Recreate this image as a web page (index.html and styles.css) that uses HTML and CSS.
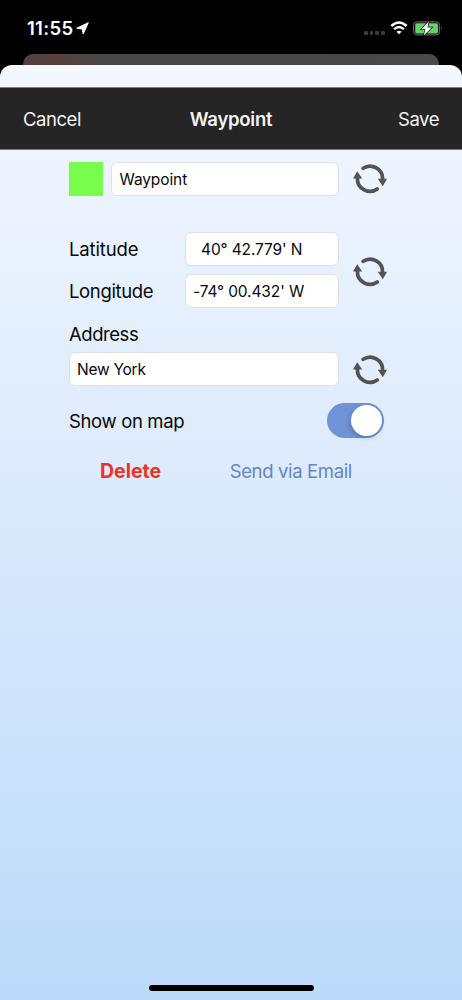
FILE: index.html
```html
<!DOCTYPE html>
<html lang="en">
<head>
  <meta charset="UTF-8">
  <meta name="viewport" content="width=device-width, initial-scale=1.0">
  <title>Waypoint</title>
  <link rel="stylesheet" href="styles.css">
</head>
<body>
  <svg class="symbols" aria-hidden="true">
    <symbol id="refresh" viewBox="0 0 36 36">
      <path d="M11.1 7.3 A12.6 12.6 0 0 1 30.6 18.5" fill="none" stroke="#535351" stroke-width="3.7" stroke-linecap="round"/>
      <path d="M25.8 17.8 H35 L30.8 25.2 Z" fill="#535351"/>
      <path d="M25.3 28 A12.6 12.6 0 0 1 5.4 17.5" fill="none" stroke="#535351" stroke-width="3.7" stroke-linecap="round"/>
      <path d="M10.2 17.6 H1 L5.2 10.2 Z" fill="#535351"/>
    </symbol>
  </svg>

  <div class="status-bar">
    <div class="clock">
      <span class="time">11:55</span>
      <svg class="location" viewBox="0 0 13 13"><path d="M12.3 0.7 L7.2 12 L6.1 7 L0.7 6.2 Z" fill="#fff" stroke="#fff" stroke-width="1" stroke-linejoin="round"/></svg>
    </div>
    <div class="status-icons">
      <div class="signal"><i></i><i></i><i></i><i></i></div>
      <svg class="wifi" viewBox="0 0 18 14">
        <path d="M1.3 5 Q9 -2 16.7 5" fill="none" stroke="#fff" stroke-width="2.6"/>
        <path d="M4.1 8.2 Q9 3.8 13.9 8.2" fill="none" stroke="#fff" stroke-width="2.4"/>
        <path d="M9 13.3 L6.5 10.7 Q9 8.6 11.5 10.7 Z" fill="#fff"/>
      </svg>
      <svg class="battery" viewBox="0 0 30 15">
        <rect x="0.6" y="0.9" width="26" height="13" rx="3.6" fill="none" stroke="#777" stroke-width="1"/>
        <rect x="2.2" y="2.3" width="22.8" height="10.2" rx="1.8" fill="#65d368"/>
        <path d="M28 5 Q29.5 7.4 28 9.8 Z" fill="#777"/>
        <path d="M15.8 0.6 L8.3 8.3 H12.4 L10.8 14.5 L18.8 6.4 H14.5 Z" fill="#fff" stroke="#111" stroke-width="1.4" paint-order="stroke"/>
      </svg>
    </div>
  </div>

  <div class="back-card"></div>

  <div class="sheet">
    <nav class="navbar">
      <span class="nav-btn">Cancel</span>
      <h1>Waypoint</h1>
      <span class="nav-btn save">Save</span>
    </nav>

    <div class="form">
      <div class="row">
        <div class="color-swatch"></div>
        <div class="field name-field">Waypoint</div>
        <svg class="refresh"><use href="#refresh"/></svg>
      </div>

      <div class="row coords">
        <div class="coord-list">
          <div class="coord">
            <label class="latitude-label">Latitude</label>
            <div class="field coord-field lat">40° 42.779' N</div>
          </div>
          <div class="coord">
            <label>Longitude</label>
            <div class="field coord-field">-74° 00.432' W</div>
          </div>
        </div>
        <svg class="refresh"><use href="#refresh"/></svg>
      </div>

      <label class="address-label">Address</label>
      <div class="row address-row">
        <div class="field address-field">New York</div>
        <svg class="refresh"><use href="#refresh"/></svg>
      </div>

      <div class="row map-row">
        <label>Show on map</label>
        <div class="switch"><div class="knob"></div></div>
      </div>

      <div class="row actions">
        <span class="delete">Delete</span>
        <span class="email">Send via Email</span>
      </div>
    </div>

    <div class="home-indicator"></div>
  </div>
</body>
</html>
```
FILE: styles.css
```css
* {
  box-sizing: border-box;
}
body {
  font-family: Inter, "Liberation Sans", sans-serif;
  margin: 0;
  width: 462px;
  height: 1000px;
  display: flex;
  flex-direction: column;
  background: #000;
  color: #080808;
  overflow: hidden;
}
.symbols {
  position: absolute;
  width: 0;
  height: 0;
}
svg {
  display: block;
  flex: none;
}
span,
label {
  white-space: nowrap;
}

/* status bar */
.status-bar {
  height: 54px;
  flex: none;
  display: flex;
  justify-content: space-between;
  padding: 0 19px 0 27px;
}
.clock {
  display: flex;
  align-items: center;
  gap: 3px;
  height: 56px;
  color: #fff;
}
.time {
  font-size: 18.5px;
  font-weight: 600;
  letter-spacing: 0.3px;
}
.location {
  width: 13px;
  height: 13px;
}
.status-icons {
  display: flex;
  align-items: center;
  height: 56px;
}
.signal {
  display: flex;
  gap: 2px;
  margin: 9px 5px 0 0;
}
.signal i {
  width: 3.8px;
  height: 4px;
  border-radius: 1px;
  background: #3b3b3b;
}
.wifi {
  width: 18px;
  height: 14px;
  margin-right: 5px;
}
.battery {
  width: 30px;
  height: 15px;
}

/* edge of the screen underneath */
.back-card {
  height: 11px;
  flex: none;
  margin: 0 23px;
  border-radius: 10px 10px 0 0;
  background: linear-gradient(90deg, #50413f, #583f3c 8%, #474845 18%, #474845 70%, #4a4a49);
}

.sheet {
  flex: 1;
  display: flex;
  flex-direction: column;
  padding-top: 22px;
  border-radius: 12px 12px 0 0;
  background: linear-gradient(#f4f8ff, #eef5ff 9%, #dceafc 45%, #bcdafa);
}
.navbar {
  height: 63px;
  flex: none;
  display: grid;
  grid-template-columns: 1fr auto 1fr;
  align-items: center;
  padding: 0 23px;
  background: #252525;
  border-top: 1px solid #77797c;
  border-bottom: 1px solid #77797c;
  color: #f4f4f4;
}
.navbar h1 {
  margin: 0;
  font-size: 18.5px;
  font-weight: 600;
  letter-spacing: -0.25px;
}
.nav-btn {
  font-size: 18.5px;
  letter-spacing: -0.45px;
}
.save {
  text-align: right;
}

/* form */
.form {
  width: 318px;
  margin: 12px 0 0 69px;
}
.row {
  display: flex;
  align-items: center;
  justify-content: space-between;
}
.color-swatch {
  width: 34px;
  height: 34px;
  background: #78fc4d;
}
.field {
  height: 34px;
  display: flex;
  align-items: center;
  padding: 0 7px;
  border: 1px solid #dcdfe4;
  border-radius: 6px;
  background: #fff;
  font-size: 15.5px;
  letter-spacing: -0.12px;
  white-space: pre;
}
.name-field {
  width: 228px;
  padding-left: 8px;
  margin-right: 6px;
  letter-spacing: -0.1px;
}
.refresh {
  width: 36px;
  height: 36px;
  margin: -1px -1px -1px 0;
}
.coords {
  margin-top: 36px;
}
.coords .refresh {
  margin-top: 2px;
}
.coord-list {
  display: flex;
  flex-direction: column;
  gap: 8px;
}
.coord {
  width: 270px;
  display: flex;
  align-items: center;
  justify-content: space-between;
}
label {
  font-size: 18.5px;
  letter-spacing: -0.35px;
}
.latitude-label {
  letter-spacing: -0.15px;
}
.coord-field {
  width: 154px;
}
.lat {
  padding-left: 15px;
}
.address-label {
  display: block;
  height: 44px;
  line-height: 53px;
  letter-spacing: -0.45px;
}
.address-row .refresh {
  margin: 0 -1px -2px 0;
}
.address-field {
  width: 270px;
  letter-spacing: -0.25px;
}
.map-row {
  margin-top: 17px;
}
.switch {
  width: 57px;
  height: 35px;
  margin-right: 3px;
  padding: 2px;
  display: flex;
  justify-content: flex-end;
  border-radius: 18px;
  background: #7092d6;
}
.knob {
  width: 31px;
  height: 31px;
  border-radius: 50%;
  background: #fff;
  box-shadow: -1px 2px 5px rgba(0, 0, 0, 0.2);
}
.actions {
  height: 24px;
  margin-top: 21px;
  padding: 0 35px 0 31px;
  font-size: 18.5px;
}
.delete {
  color: #eb3324;
  font-size: 19.5px;
  font-weight: 700;
}
.email {
  color: #6485c8;
  letter-spacing: -0.35px;
}

.home-indicator {
  width: 165px;
  height: 6px;
  margin: auto auto 9px;
  border-radius: 3px;
  background: #000;
}
```
